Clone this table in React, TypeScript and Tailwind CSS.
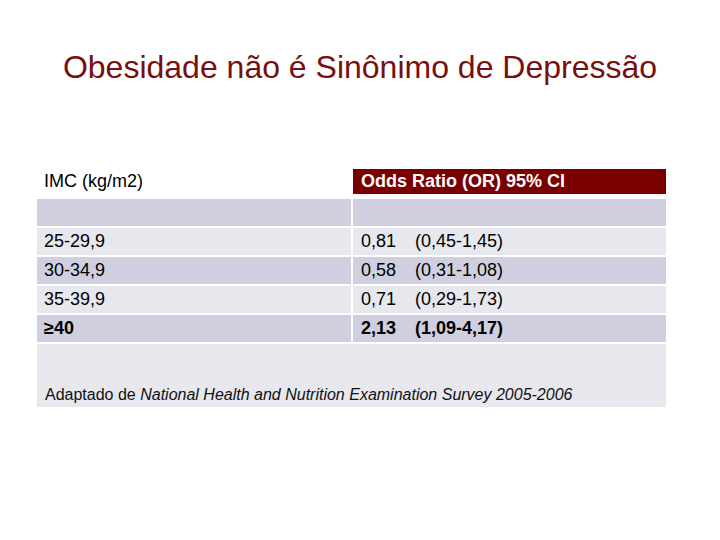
import React from 'react';

// Slide: odds ratios for depression by BMI band.
const rows = [
  { imc: '25-29,9', or: '0,81', ci: '(0,45-1,45)' },
  { imc: '30-34,9', or: '0,58', ci: '(0,31-1,08)' },
  { imc: '35-39,9', or: '0,71', ci: '(0,29-1,73)' },
  { imc: '≥40', or: '2,13', ci: '(1,09-4,17)', bold: true },
];

const dark = 'bg-[#cfcfdf]';
const light = 'bg-[#e7e7ee]';

export default function App() {
  return (
    <div
      className="w-[720px] h-[540px] bg-white text-black"
      style={{ fontFamily: '"Liberation Sans", Arial, sans-serif' }}
    >
      <h1 className="pt-[51px] text-center text-[32px] leading-[32px] text-[#780f0f]">
        Obesidade não é Sinônimo de Depressão
      </h1>

      <div className="ml-[37px] mt-[86px] w-[629px] grid grid-cols-[314px_313px] gap-x-[2px] gap-y-[2px] text-[18px]">
        <div className="h-[25px] mb-[3px] flex items-center pl-[7px]">IMC (kg/m2)</div>
        <div className="h-[25px] mb-[3px] flex items-center pl-[8px] bg-[#7a0000] text-white font-bold">
          Odds Ratio (OR) 95% CI
        </div>

        <div className={`h-[27px] ${dark}`} />
        <div className={`h-[27px] ${dark}`} />

        {rows.map((r, i) => {
          const bg = i % 2 === 0 ? light : dark;
          return (
            <React.Fragment key={r.imc}>
              <div className={`h-[27px] flex items-center pl-[7px] ${bg} ${r.bold ? 'font-bold' : ''}`}>
                {r.imc}
              </div>
              <div className={`h-[27px] flex items-center pl-[8px] ${bg} ${r.bold ? 'font-bold' : ''}`}>
                <span className="w-[54px]">{r.or}</span>
                <span>{r.ci}</span>
              </div>
            </React.Fragment>
          );
        })}

        <div className={`col-span-2 h-[63px] pt-[42px] pl-[8px] text-[16px] leading-[18px] text-[#111] ${light}`}>
          Adaptado de <i>National Health and Nutrition Examination Survey 2005-2006</i>
        </div>
      </div>
    </div>
  );
}
